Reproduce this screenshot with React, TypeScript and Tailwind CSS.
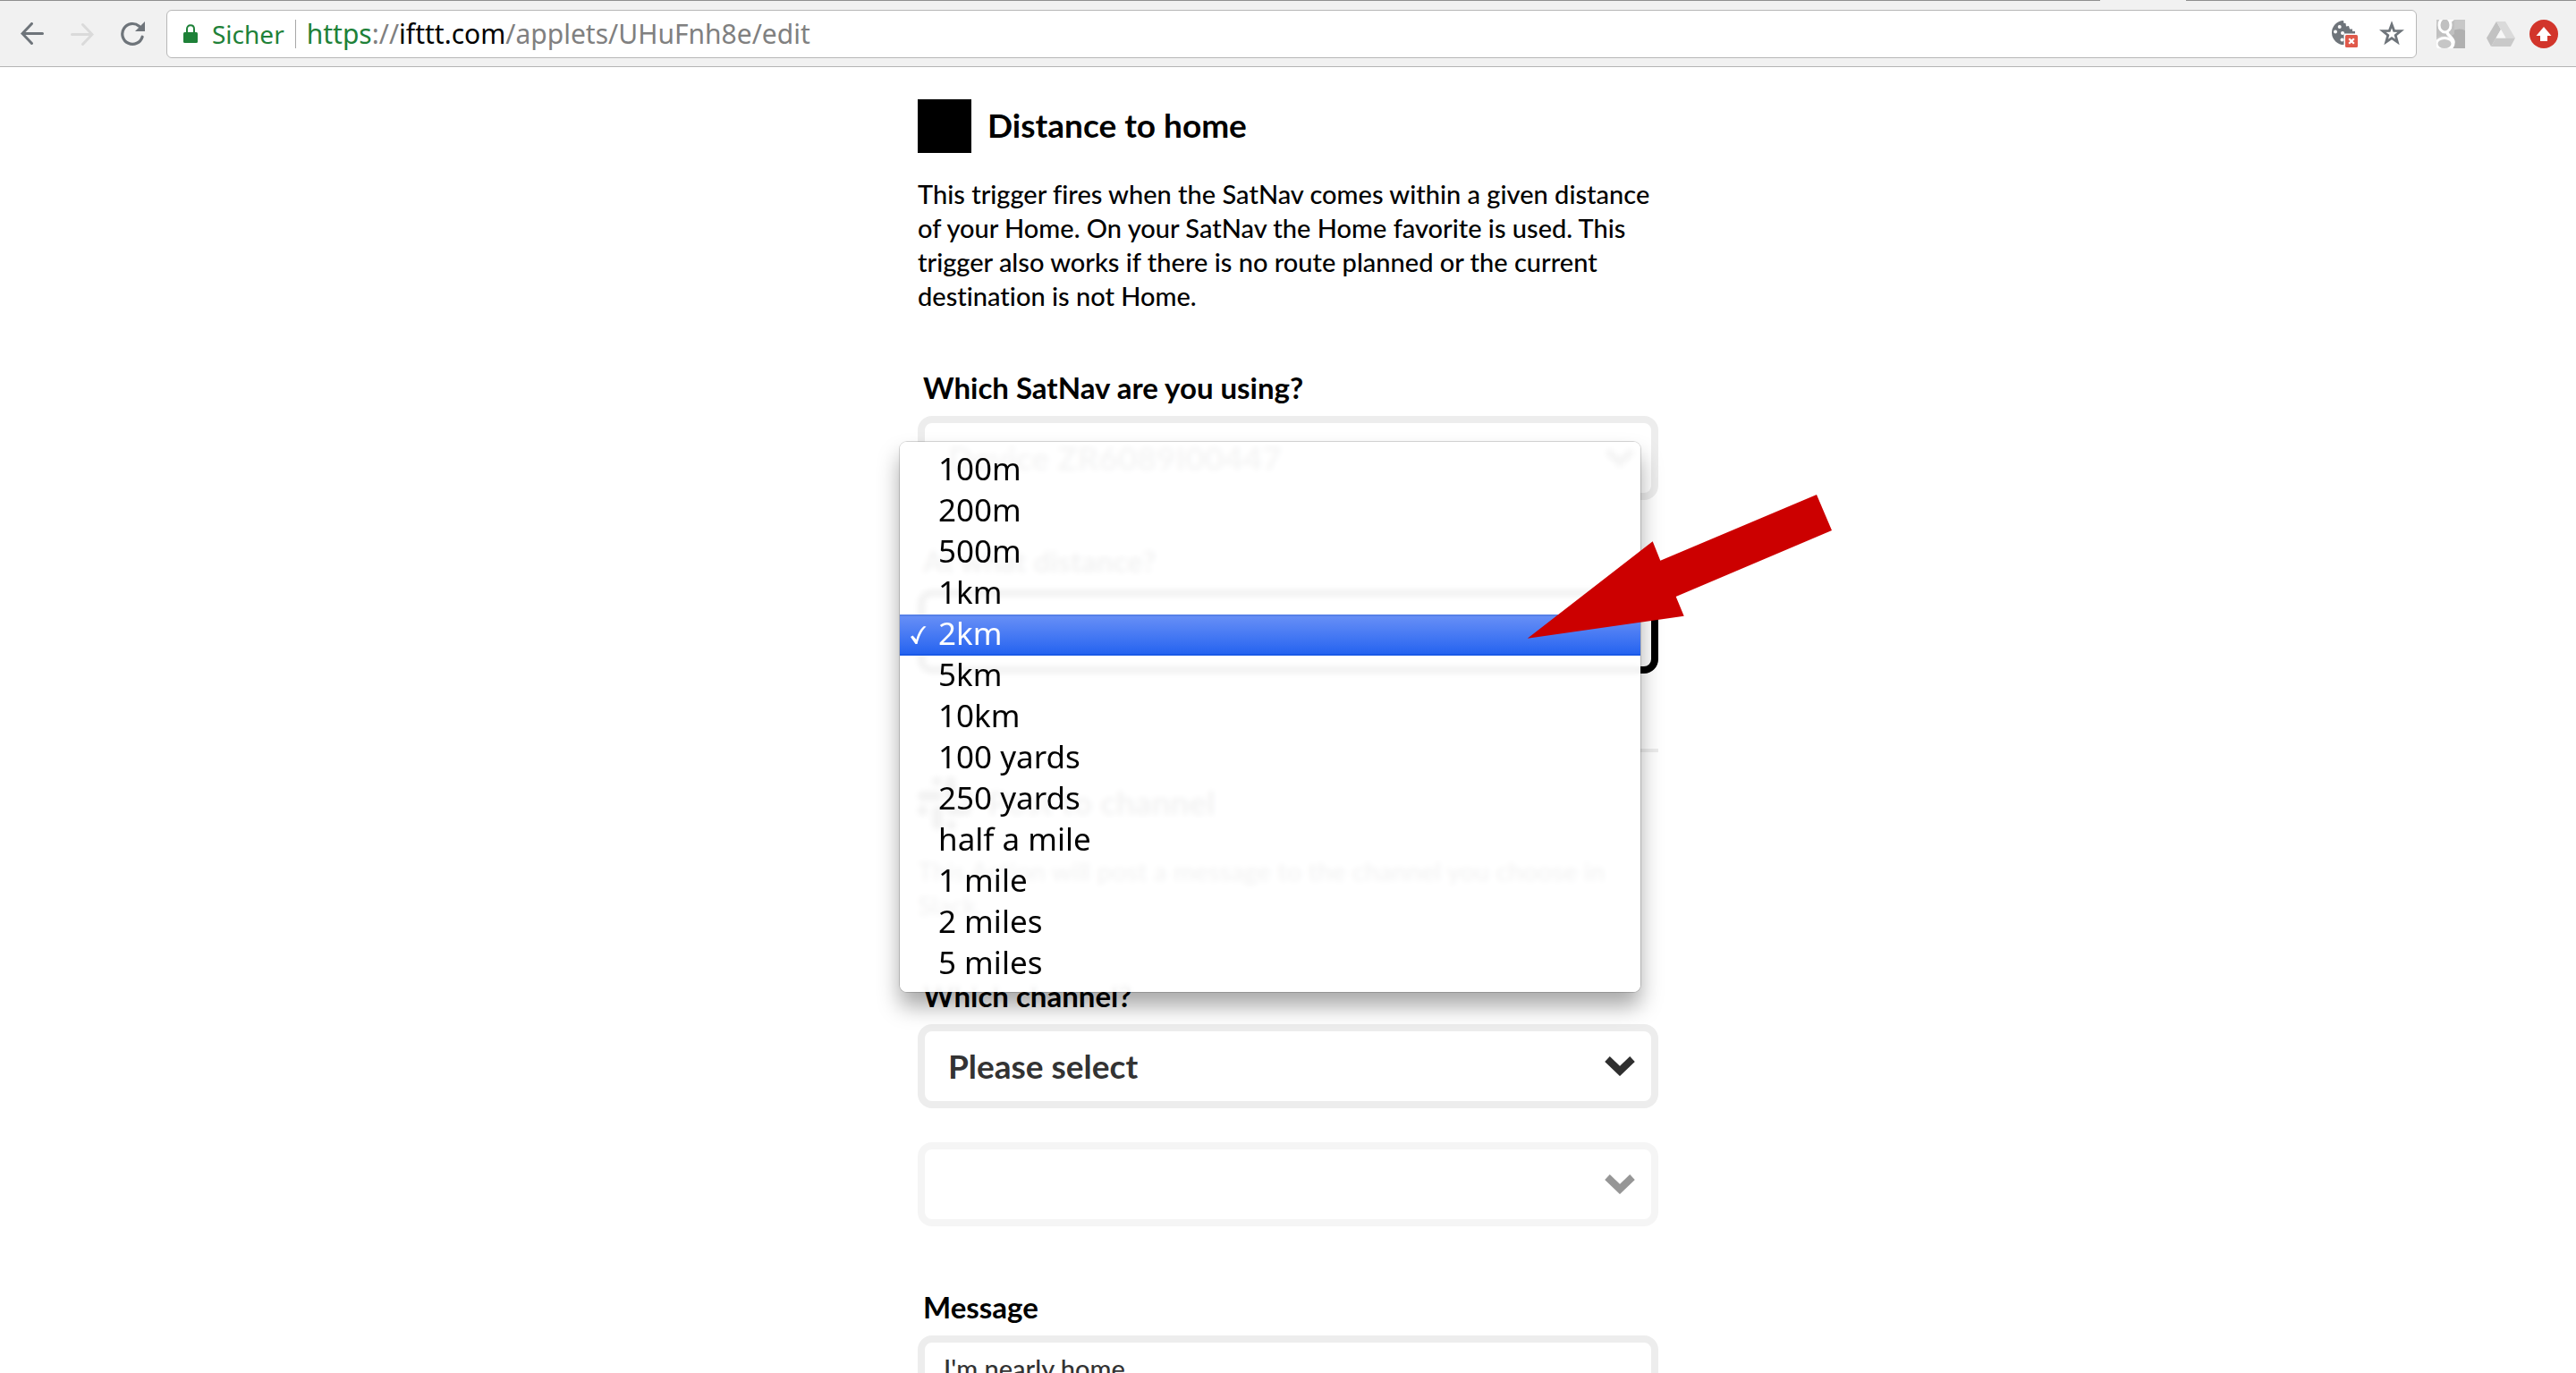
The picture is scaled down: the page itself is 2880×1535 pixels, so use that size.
import clsx from "clsx";
import { ReactNode } from "react";

const distances = ["100m", "200m", "500m", "1km", "2km", "5km", "10km", "100 yards", "250 yards", "half a mile", "1 mile", "2 miles", "5 miles"];

function ArrowIcon({ className }: { className?: string }) {
  return <svg className={className} width="26" height="26" viewBox="0 0 26 26" fill="none" stroke="currentColor" strokeWidth="3" strokeLinecap="round">
    <path d="M24.5 12.5H2M12.5 1.5L2 12.5L12.5 23.5" />
  </svg>
}

function ReloadIcon() {
  return <svg width="28" height="28" viewBox="0 0 28 28" fill="none">
    <path d="M20.5 5.2A11.4 11.4 0 1 0 24.1 17.2" stroke="currentColor" strokeWidth="3.2" strokeLinecap="round" />
    <path d="M27 0V11H16Z" fill="currentColor" />
  </svg>
}

function LockIcon() {
  return <svg width="16" height="21" viewBox="0 0 16 21" fill="none">
    <rect y="9" width="16" height="12" rx="1.5" fill="#1e8138" />
    <path d="M4 10V5.5C4 2.8 5.7 1.2 8 1.2S12 2.8 12 5.5V10" stroke="#1e8138" strokeWidth="2" />
  </svg>
}

function CookieIcon() {
  return <svg width="30" height="30" viewBox="0 0 30 30">
    <path d="M14 0A13.5 13.5 0 1 0 15 27V15H27V12L24 12V9.500L21 9.500L20 6L17 6.500L16.500 3L14.500 3Z" fill="#6e747a" />
    <circle cx="9.700" cy="7" r="2" fill="#fff" />
    <circle cx="5" cy="12.500" r="2" fill="#fff" />
    <circle cx="13" cy="14" r="2" fill="#fff" />
    <circle cx="12.500" cy="21.500" r="2" fill="#fff" />
    <rect x="14.500" y="14.500" width="16" height="16" fill="#fff" />
    <rect x="16" y="16" width="14" height="14" rx="1.500" fill="#e0594a" />
    <path d="M20.200 20.200L25.800 25.800M25.800 20.200L20.200 25.800" stroke="#fff" strokeWidth="2.200" />
  </svg>
}

function StarIcon() {
  return <svg width="30" height="29" viewBox="0 0 30 29">
    <path d="M15 4.300L17.600 11.300L25.200 11.600L19.200 16.400L21.300 23.900L15 19.700L8.700 23.900L10.800 16.400L4.800 11.600L12.400 11.300Z" fill="none" stroke="#6e747a" strokeWidth="2.800" />
  </svg>
}

function GoogleIcon() {
  return <svg width="32" height="32" viewBox="0 0 32 32">
    <rect width="32" height="32" fill="#c8c8c8" />
    <path d="M16 14A16 16 0 0 1 32 12V32H16Z" fill="#b0b0b0" />
    <path d="M0 6V20C5 17 10 17 13 20L20 16V0H4Z" fill="#c0c0c0" />
    <ellipse cx="9.500" cy="6" rx="6.500" ry="8" fill="#c0c0c0" stroke="#fff" strokeWidth="3" />
    <path d="M12 13.500C11 17 19 20 19 25C19 28 18 30 16 32" fill="none" stroke="#fff" strokeWidth="3.500" />
    <ellipse cx="9" cy="27" rx="9" ry="6.500" fill="#c6c6c6" stroke="#fff" strokeWidth="3" />
    <path d="M14 0H20L17 2.500Z" fill="#fff" />
  </svg>
}

function DriveIcon() {
  return <svg width="32" height="28" viewBox="0 0 32 28">
    <path d="M11 0L0 18.500L5 28L16 9Z" fill="#c2c2c2" />
    <path d="M11 0H21L32 18.500H21.500Z" fill="#dadada" />
    <path d="M10.500 18.500H32L27 28H5Z" fill="#c9c9c9" />
    <path d="M16 9L21.500 18.500H10.500Z" fill="#f7f7f7" />
  </svg>
}

function UploadIcon() {
  return <svg width="32" height="32" viewBox="0 0 32 32">
    <circle cx="16" cy="16" r="16" fill="#d2352b" />
    <path d="M16 8L24.500 18H20V24H12V18H7.500Z" fill="#fff" />
  </svg>
}

function Toolbar() {
  return <header className="relative flex h-[75px] shrink-0 items-center border-t border-b border-t-[#8f8f8f] border-b-[#b4b4b4] bg-[#f1f1f1] pr-5 pl-[23px] font-['Noto_Sans',sans-serif] text-[#6e747a]">
    {/* bottom edge of the active tab */}
    <div className="absolute -top-px right-[436px] h-px w-24 bg-[#f1f1f1]" />
    <div className="mr-[23px] flex items-center gap-[30px]">
      <button type="button" aria-label="Back"><ArrowIcon /></button>
      <button type="button" aria-label="Forward" disabled className="text-[#dadada]"><ArrowIcon className="rotate-180" /></button>
      <button type="button" aria-label="Reload"><ReloadIcon /></button>
    </div>
    <div className="flex h-[54px] flex-1 items-center rounded-md border border-[#b8b8b8] bg-white pr-3 pl-[18px]">
      <LockIcon />
      <span className="ml-4 text-[28px] leading-10 text-[#1e8138]">Sicher</span>
      <span className="mx-3 h-8 w-px bg-[#a8a8a8]" />
      <span className="flex-1 text-[30px] leading-10 text-[#808080]"><span className="text-[#1e8138]">https</span>://<span className="text-black">ifttt.com</span>/applets/UHuFnh8e/edit</span>
      <div className="flex items-center gap-[23px]">
        <button type="button" aria-label="Cookies blocked"><CookieIcon /></button>
        <button type="button" aria-label="Bookmark this page"><StarIcon /></button>
      </div>
    </div>
    <div className="ml-[22px] flex items-center">
      <button type="button" aria-label="Google" className="mr-6"><GoogleIcon /></button>
      <button type="button" aria-label="Drive" className="mr-4"><DriveIcon /></button>
      <button type="button" aria-label="Update"><UploadIcon /></button>
    </div>
  </header>
}

function SlackIcon() {
  return <svg width="60" height="60" viewBox="0 0 60 60" fill="#111">
    <rect x="16" y="0" width="11" height="11" rx="5.500" />
    <rect x="31" y="0" width="12" height="28" rx="6" />
    <rect x="0" y="16" width="28" height="12" rx="6" />
    <rect x="49" y="16" width="11" height="12" rx="5.500" />
    <rect x="0" y="32" width="11" height="12" rx="5.500" />
    <rect x="16" y="32" width="12" height="28" rx="6" />
    <rect x="32" y="32" width="28" height="12" rx="6" />
    <rect x="32" y="49" width="11" height="11" rx="5.500" />
  </svg>
}

function SectionHeader({ icon, title, children }: { icon: ReactNode, title: string, children: ReactNode }) {
  return <>
    <div className="flex items-start gap-[18px]">
      {icon}
      <h2 className="text-[37px] leading-[58px] font-bold">{title}</h2>
    </div>
    <p className="mt-[27px] text-[29px] leading-[38px] font-medium">{children}</p>
  </>
}

function Label({ htmlFor, children }: { htmlFor: string, children: ReactNode }) {
  return <label htmlFor={htmlFor} className="mb-3 block pl-[6px] text-[33px] leading-10 font-bold">{children}</label>
}

interface SelectBoxProps {
  id: string
  options: string[]
  value: string
  active?: boolean
  disabled?: boolean
  label?: string
}

function SelectBox({ id, options, value, active, disabled, label }: SelectBoxProps) {
  return <div className={clsx("relative", disabled && "opacity-50")}>
    <select id={id} aria-label={label} defaultValue={value} disabled={disabled} className={clsx("block h-[94px] w-full appearance-none rounded-2xl border-8 bg-white pl-[26px] text-[37px] font-bold text-[#333] outline-none", active ? "border-black" : "border-[#ededed]")}>
      {options.map((option) => <option key={option}>{option}</option>)}
    </select>
    <svg className="pointer-events-none absolute top-9 right-[26px]" width="34" height="22" viewBox="0 0 34 22" fill="none" stroke="#2f2f2f" strokeWidth="8">
      <path d="M3 3L17 16.500L31 3" />
    </svg>
  </div>
}

function DistanceMenu({ selected }: { selected: string }) {
  return <ul role="listbox" aria-label="Distance" className="absolute -top-[165px] right-5 -left-5 z-10 rounded-lg bg-white/95 pt-[9px] pb-2 font-['Noto_Sans',sans-serif] text-[35px] leading-[38px] shadow-[0_0_0_1px_rgba(0,0,0,0.16),0_16px_24px_rgba(0,0,0,0.34)] backdrop-blur-[3px]">
    {distances.map((distance) => <li key={distance} role="option" aria-selected={distance === selected} className={clsx("flex h-[46px] items-start border-y-2 pl-3", distance === selected ? "border-t-[#5680e8] border-b-[#1a59e6] bg-linear-to-b from-[#668ef6] to-[#2463f0] text-white" : "border-transparent")}>
      <span className="w-[31px] pt-[10px]">
        {distance === selected && <svg width="20" height="22" viewBox="0 0 20 22" fill="currentColor">
          <path d="M0 13L2.500 11.500L6.500 16C8 9.500 11 4 15 1L17.500 1.500C12.500 6 9.500 13 7.500 21H5.500Z" />
        </svg>}
      </span>
      {distance}
    </li>)}
  </ul>
}

function PointerArrow() {
  return <svg className="pointer-events-none absolute -top-[107px] left-[681px] z-20" width="342" height="164" viewBox="0 0 342 164" fill="#c00">
    <path d="M0.700 161.700L140.700 53.300L149.300 74.700L324 1L341 41L166.700 115L175.700 136.700Z" />
  </svg>
}

export default function App() {
  return <div className="flex h-screen flex-col overflow-hidden bg-white font-['Lato',sans-serif] text-black [font-variant-ligatures:none]">
    <Toolbar />
    <main className="min-h-0 flex-1 overflow-hidden">
      <form className="mx-auto w-full max-w-[828px] pt-9">
        <SectionHeader icon={<div className="size-[60px] bg-black" />} title="Distance to home">
          This trigger fires when the SatNav comes within a given distance of your Home. On your SatNav the Home favorite is used. This trigger also works if there is no route planned or the current destination is not Home.
        </SectionHeader>

        <div className="mt-[63px]">
          <Label htmlFor="satnav">Which SatNav are you using?</Label>
          <SelectBox id="satnav" options={["Device ZR6089I00447"]} value="Device ZR6089I00447" />
        </div>

        <div className="mt-12">
          <Label htmlFor="distance">At what distance?</Label>
          <div className="relative">
            <SelectBox id="distance" options={["", ...distances]} value="" active />
            <DistanceMenu selected="2km" />
            <PointerArrow />
          </div>
        </div>

        <hr className="mt-[84px] mb-[27px] border-t-4 border-[#ededed]" />

        <SectionHeader icon={<SlackIcon />} title="Post to channel">
          This Action will post a message to the channel you choose in Slack.
        </SectionHeader>

        <div className="mt-[62px]">
          <Label htmlFor="channel">Which channel?</Label>
          <SelectBox id="channel" options={["Please select"]} value="Please select" />
        </div>
        <div className="mt-[38px]">
          <SelectBox id="subchannel" label="Channel name" options={[""]} value="" disabled />
        </div>

        <div className="mt-[70px]">
          <Label htmlFor="message">Message</Label>
          <textarea id="message" rows={4} defaultValue="I'm nearly home" className="block w-full resize-none rounded-2xl border-8 border-[#ededed] px-[21px] py-[10px] text-[29px] leading-[38px] font-medium text-[#333] outline-none" />
        </div>
      </form>
    </main>
  </div>
}
